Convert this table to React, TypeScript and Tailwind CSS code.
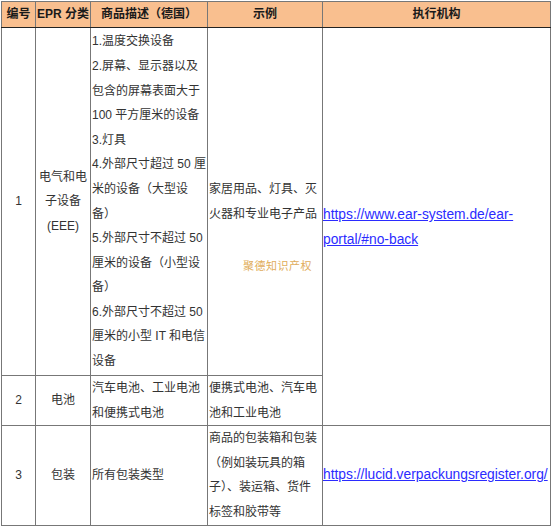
import * as React from "react";

const font = { fontFamily: '"Liberation Sans", "Noto Sans CJK SC", sans-serif' };

function Lines({ lines }: { lines: string[] }) {
  return (
    <>
      {lines.map((l, i) => (
        <div key={i} className="whitespace-nowrap">
          {l}
        </div>
      ))}
    </>
  );
}

const cell = "border border-[#777] p-0 align-middle";
const link = "text-[13.8px] text-[#2b2bff] underline whitespace-nowrap";

export default function App() {
  return (
    <div
      className="relative w-[554px] h-[531px] bg-white text-[12px] leading-[24.6px] text-[#333]"
      style={font}
    >
      <table className="ml-px mt-px table-fixed border-collapse w-[549px]">
        <colgroup>
          <col className="w-[34px]" />
          <col className="w-[55px]" />
          <col className="w-[117px]" />
          <col className="w-[115px]" />
          <col className="w-[228px]" />
        </colgroup>
        <thead>
          <tr className="h-[26px] bg-[#F9BF8F] font-bold text-[#1a1a1a]">
            <th className={`${cell} border-b-[#222] text-center`}>编号</th>
            <th className={`${cell} border-b-[#222] border-l-[#222] text-center`}>EPR 分类</th>
            <th className={`${cell} border-b-[#222] text-center`}>商品描述（德国）</th>
            <th className={`${cell} border-b-[#222] text-center`}>示例</th>
            <th className={`${cell} border-b-[#222] text-center`}>执行机构</th>
          </tr>
        </thead>
        <tbody>
          <tr className="h-[348px]">
            <td className={`${cell} text-center`}>1</td>
            <td className={`${cell} border-l-[#222] text-center`}>
              <Lines lines={["电气和电", "子设备", "(EEE)"]} />
            </td>
            <td className={`${cell} pl-px`}>
              <Lines
                lines={[
                  "1.温度交换设备",
                  "2.屏幕、显示器以及",
                  "包含的屏幕表面大于",
                  "100 平方厘米的设备",
                  "3.灯具",
                  "4.外部尺寸超过 50 厘",
                  "米的设备（大型设",
                  "备）",
                  "5.外部尺寸不超过 50",
                  "厘米的设备（小型设",
                  "备）",
                  "6.外部尺寸不超过 50",
                  "厘米的小型 IT 和电信",
                  "设备",
                ]}
              />
            </td>
            <td className={`${cell} pl-px`}>
              <Lines lines={["家居用品、灯具、灭", "火器和专业电子产品"]} />
            </td>
            <td className={`${cell} pt-[2px]`} rowSpan={2}>
              <a href="#" className={link}>
                https://www.ear-system.de/ear-
              </a>
              <br />
              <a href="#" className={link}>
                portal/#no-back
              </a>
            </td>
          </tr>
          <tr className="h-[50px]">
            <td className={`${cell} text-center`}>2</td>
            <td className={`${cell} border-l-[#222] text-center`}>电池</td>
            <td className={`${cell} pl-px`}>
              <Lines lines={["汽车电池、工业电池", "和便携式电池"]} />
            </td>
            <td className={`${cell} pl-px`}>
              <Lines lines={["便携式电池、汽车电", "池和工业电池"]} />
            </td>
          </tr>
          <tr className="h-[99px]">
            <td className={`${cell} text-center`}>3</td>
            <td className={`${cell} border-l-[#222] text-center`}>包装</td>
            <td className={`${cell} pl-px`}>所有包装类型</td>
            <td className={`${cell} pl-px`}>
              <Lines lines={["商品的包装箱和包装", "（例如装玩具的箱", "子）、装运箱、货件", "标签和胶带等"]} />
            </td>
            <td className={`${cell} overflow-hidden`}>
              <a href="#" className={link}>
                https://lucid.verpackungsregister.org/
              </a>
            </td>
          </tr>
        </tbody>
      </table>
      <div
        className="absolute left-[243px] top-[257px] text-[11px] leading-[16px] tracking-[0.5px] text-[#dfad5c]"
        style={{ fontFamily: '"Liberation Serif", "Noto Sans CJK SC", serif' }}
      >
        聚德知识产权
      </div>
    </div>
  );
}
